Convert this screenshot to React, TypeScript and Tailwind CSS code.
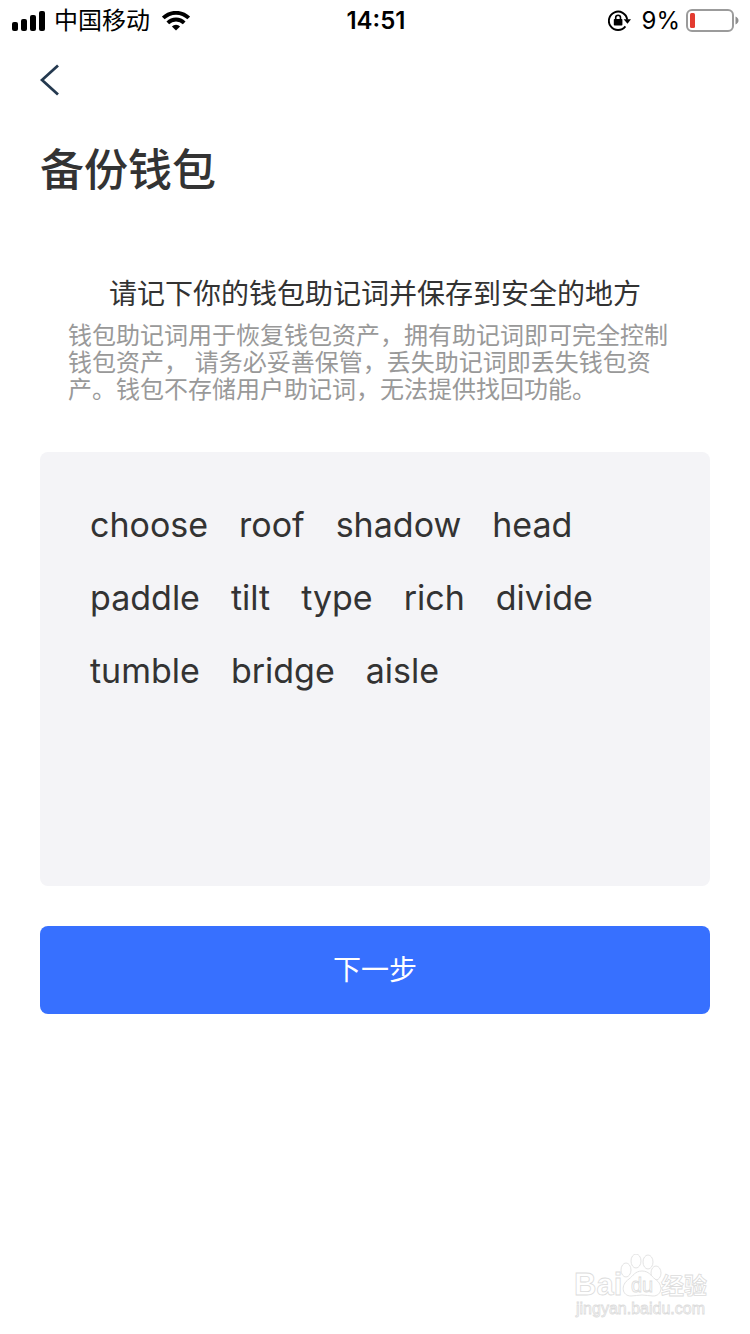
const MNEMONIC = [
  'choose', 'roof', 'shadow', 'head',
  'paddle', 'tilt', 'type', 'rich', 'divide',
  'tumble', 'bridge', 'aisle',
]

function SignalIcon() {
  return (
    <svg width="34" height="20" viewBox="0 0 34 20" fill="#000" aria-hidden="true">
      <rect x="0" y="11" width="6" height="9" rx="2" />
      <rect x="9" y="8" width="6" height="12" rx="2" />
      <rect x="18" y="4" width="6" height="16" rx="2" />
      <rect x="27" y="0" width="6" height="20" rx="2" />
    </svg>
  )
}

function WifiIcon() {
  return (
    <svg width="28" height="20" viewBox="0 0 28 20" fill="none" stroke="#000" strokeWidth="3.8" aria-hidden="true">
      <path d="M1.3 7a18 18 0 0 1 25.4 0" />
      <path d="M5.8 11.9a11.6 11.6 0 0 1 16.4 0" />
      <path d="M14 19.6l-4.1-4.1a5.8 5.8 0 0 1 8.2 0z" fill="#000" stroke="none" />
    </svg>
  )
}

function RotationLockIcon() {
  return (
    <svg width="24" height="22" viewBox="0 0 24 22" aria-hidden="true">
      <path d="M17.4 16.4A9.2 9.2 0 1 1 19.2 9.6" fill="none" stroke="#000" strokeWidth="1.9" />
      <path d="M15.6 9.2h7.4l-3.5 4.6z" />
      <rect x="5.8" y="9" width="8.6" height="6.6" rx="0.8" />
      <path d="M7.7 9.8V7.6a2.4 2.4 0 0 1 4.8 0v2.2" fill="none" stroke="#000" strokeWidth="1.6" />
    </svg>
  )
}

function BatteryIcon() {
  return (
    <svg width="54" height="24" viewBox="0 0 54 24" aria-hidden="true">
      <rect x="1" y="1" width="46" height="21" rx="5" fill="#fff" stroke="#9b9b9b" strokeWidth="2" />
      <rect x="4" y="4" width="5" height="15" rx="1.5" fill="#e33b30" />
      <path d="M49.5 7.5c4 1.6 4 6.4 0 8z" fill="#8e8e8e" />
    </svg>
  )
}

function StatusBar() {
  return (
    <header className="grid h-[42px] grid-cols-3 items-center pl-3 pr-2.5 text-2xl text-black">
      <div className="flex items-center">
        <SignalIcon />
        <span className="ml-2 mr-3 whitespace-nowrap">中国移动</span>
        <WifiIcon />
      </div>
      <time className="text-center font-semibold">14:51</time>
      <div className="flex items-center justify-end">
        <RotationLockIcon />
        <span className="ml-2.5 mr-1.5">9%</span>
        <BatteryIcon />
      </div>
    </header>
  )
}

function Watermark() {
  return (
    <svg width="136" height="68" viewBox="0 0 136 68" fill="#fff" stroke="#dcdcdc" strokeWidth="0.8" aria-label="Baidu 经验">
      <g fontFamily="'Liberation Sans', 'Noto Sans CJK SC', sans-serif" fontWeight="700">
        <text x="0" y="41" fontSize="31">Bai</text>
        <text x="87" y="40" fontSize="23">经验</text>
        <ellipse cx="52" cy="16" rx="5" ry="7" />
        <ellipse cx="62" cy="7" rx="5" ry="7" />
        <ellipse cx="74" cy="8" rx="5" ry="7" />
        <ellipse cx="82" cy="19" rx="5" ry="7" />
        <path d="M68 17c-7 0-9 5-13 8-9 6-7 17 2 17 4 0 7-1 11-1s7 1 11 1c9 0 11-11 2-17-4-3-6-8-13-8z" />
      </g>
      <text x="57" y="38" fontSize="20" fontFamily="'Liberation Sans', sans-serif">du</text>
      <text x="2" y="60" fontSize="16" fontFamily="'Liberation Sans', sans-serif">jingyan.baidu.com</text>
    </svg>
  )
}

export default function App() {
  return (
    <div className="flex min-h-screen flex-col bg-white font-['Inter','Noto_Sans_CJK_SC',sans-serif] text-[#333333]">
      <StatusBar />

      <main className="flex flex-col px-10">
        <nav className="flex h-[76px] items-center">
          <button type="button" aria-label="返回" className="pr-4">
            <svg width="20" height="32" viewBox="0 0 20 32" fill="none" stroke="#24394f" strokeWidth="2.8" aria-hidden="true">
              <path d="M18 1.5L2 16l16 14.5" />
            </svg>
          </button>
        </nav>

        <h1 className="mt-5 text-[44px] font-medium leading-[64px]">备份钱包</h1>

        <section className="mt-[72px] px-7">
          <h2 className="text-center text-[28px] leading-10">请记下你的钱包助记词并保存到安全的地方</h2>
          <p className="mt-2 text-2xl leading-[27px] text-[#999999]">
            钱包助记词用于恢复钱包资产，拥有助记词即可完全控制钱包资产， 请务必妥善保管，丢失助记词即丢失钱包资产。钱包不存储用户助记词，无法提供找回功能。
          </p>
        </section>

        <ul className="mt-[49px] flex min-h-[434px] flex-wrap content-start gap-x-[31px] gap-y-7 rounded-lg bg-[#f4f4f7] px-[50px] py-[50px] text-[34px] leading-[45px]">
          {MNEMONIC.map(word => (
            <li key={word}>{word}</li>
          ))}
        </ul>

        <button type="button" className="mt-10 h-[88px] rounded-lg bg-[#3770ff] text-[28px] text-white">
          下一步
        </button>
      </main>

      <footer className="mt-auto flex justify-end pb-3 pr-10">
        <Watermark />
      </footer>
    </div>
  )
}
